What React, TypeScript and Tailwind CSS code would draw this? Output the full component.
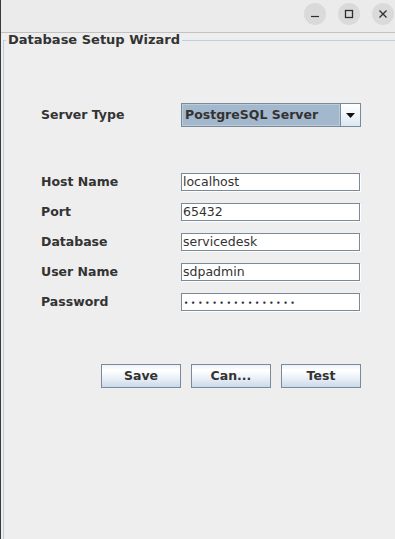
import React from "react";

const fields = [
  { label: "Host Name", value: "localhost" },
  { label: "Port", value: "65432" },
  { label: "Database", value: "servicedesk" },
  { label: "User Name", value: "sdpadmin" },
];

function Btn({ children }: { children: React.ReactNode }) {
  return (
    <button className="w-[80px] h-[24px] border border-[#7a8a99] bg-[linear-gradient(to_bottom,#eef3f9_0%,#ffffff_25%,#eaf0f7_60%,#c9d9ea_100%)] text-[12.5px] leading-[16px] font-bold text-[#333333] flex items-center justify-center">
      {children}
    </button>
  );
}

export default function App() {
  return (
    <div className="w-[395px] h-[539px] overflow-hidden bg-[#eeeeee] border-l border-[#3a3a3a] flex flex-col font-['DejaVu_Sans',sans-serif] text-[#333333]">
      {/* title bar */}
      <div className="h-[33px] shrink-0 bg-[#ebebeb] border-b border-[#c2c2c2] flex items-start justify-end gap-[12px] pt-[3px] pr-[1px]">
        <div className="w-[22px] h-[22px] rounded-full bg-[#dadada] flex items-center justify-center">
          <svg width="10" height="10" viewBox="0 0 10 10">
            <line x1="1" y1="7.5" x2="9" y2="7.5" stroke="#2e2e2e" strokeWidth="1.2" />
          </svg>
        </div>
        <div className="w-[22px] h-[22px] rounded-full bg-[#dadada] flex items-center justify-center">
          <svg width="10" height="10" viewBox="0 0 10 10">
            <rect x="1.5" y="1.5" width="7" height="7" fill="none" stroke="#2e2e2e" strokeWidth="1.3" />
          </svg>
        </div>
        <div className="w-[22px] h-[22px] rounded-full bg-[#dadada] flex items-center justify-center">
          <svg width="10" height="10" viewBox="0 0 10 10">
            <path d="M1.5 1.5 L8.5 8.5 M8.5 1.5 L1.5 8.5" stroke="#2e2e2e" strokeWidth="1.3" />
          </svg>
        </div>
      </div>

      {/* titled border panel */}
      <fieldset className="ml-[2px] flex-1 min-w-0 border-t border-l border-[#b8cfe5] p-0 m-0">
        <legend className="ml-[2px] px-[2px] text-[13px] leading-[14px] font-bold text-[#333333]">
          Database Setup Wizard
        </legend>

        <div className="flex flex-col pl-[37px]">
          {/* server type */}
          <div className="mt-[56px] flex items-center h-[24px]">
            <div className="w-[140px] text-[12.5px] leading-[16px] font-bold">Server Type</div>
            <div className="w-[180px] h-[24px] border border-[#7a8a99] flex">
              <div className="flex-1 bg-[#a3b8cc] border border-[#bccbd9] flex items-center pl-[2px] text-[12.5px] leading-[16px] font-bold text-[#333333]">
                PostgreSQL Server
              </div>
              <div className="w-[20px] border-l border-[#7a8a99] bg-[linear-gradient(to_bottom,#ffffff_0%,#f4f8fb_40%,#dbe6f1_100%)] flex items-center justify-center">
                <svg width="9" height="5" viewBox="0 0 9 5">
                  <path d="M0 0 H9 L4.5 5 Z" fill="#111111" />
                </svg>
              </div>
            </div>
          </div>

          {/* fields */}
          <div className="mt-[46px] flex flex-col gap-[12px]">
            {fields.map((f) => (
              <div key={f.label} className="flex items-center h-[18px]">
                <div className="w-[140px] text-[12.5px] leading-[16px] font-bold">{f.label}</div>
                <div className="w-[179px] h-[18px] bg-white border border-[#7a8a99] shadow-[1px_1px_0_#ffffff] pl-[1px] flex items-center text-[12.5px] leading-[16px] text-[#333333]">
                  {f.value}
                </div>
              </div>
            ))}
            <div className="flex items-center h-[18px]">
              <div className="w-[140px] text-[12.5px] leading-[16px] font-bold">Password</div>
              <div className="w-[179px] h-[18px] bg-white border border-[#7a8a99] shadow-[1px_1px_0_#ffffff] pl-[2px] pt-[2px] flex items-center text-[6.5px] leading-[14px] tracking-[2.95px] font-bold text-[#2a2a3a]">
                ••••••••••••••••
              </div>
            </div>
          </div>

          {/* buttons */}
          <div className="mt-[53px] pl-[60px] flex gap-[10px]">
            <Btn>Save</Btn>
            <Btn>Can...</Btn>
            <Btn>Test</Btn>
          </div>
        </div>
      </fieldset>
    </div>
  );
}
